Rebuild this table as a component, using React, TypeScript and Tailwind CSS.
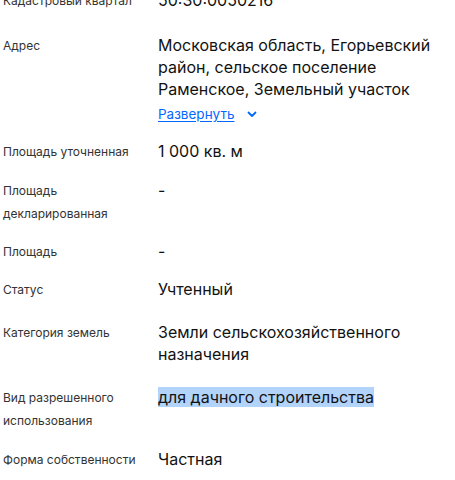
import React from "react";

const font = { fontFamily: "Inter, 'Noto Sans', sans-serif" };

function Row({
  label,
  children,
  mt,
}: {
  label: React.ReactNode;
  children: React.ReactNode;
  mt: string;
}) {
  return (
    <div className={`flex ${mt}`}>
      <div className="w-[158px] shrink-0 pl-[3px] text-[12px] leading-[23px] text-[#333333]">
        {label}
      </div>
      <div className="flex-1 pr-4 text-[16px] leading-[22px] text-[#121212]">{children}</div>
    </div>
  );
}

export default function App() {
  return (
    <div className="w-[455px] h-[480px] overflow-hidden bg-white" style={font}>
      <div className="flex flex-col -mt-[11px]">
        <Row label="Кадастровый квартал" mt="mt-0">
          50:30:0050216
        </Row>
        <Row label="Адрес" mt="mt-[22px]">
          <div>Московская область, Егорьевский район, сельское поселение Раменское, Земельный участок</div>
          <div className="mt-[3px] flex items-center gap-[12px] text-[13.5px] leading-[22px] text-[#0468ff]">
            <span className="underline underline-offset-2">Развернуть</span>
            <svg width="12" height="12" viewBox="0 0 12 12" fill="none">
              <path d="M2.5 4.5L6 8L9.5 4.5" stroke="#0468ff" strokeWidth="1.8" strokeLinecap="round" strokeLinejoin="round" />
            </svg>
          </div>
        </Row>
        <Row label="Площадь уточненная" mt="mt-[15px]">
          1 000 кв. м
        </Row>
        <Row label={<>Площадь<br />декларированная</>} mt="mt-[16px]">
          -
        </Row>
        <Row label="Площадь" mt="mt-[15px]">
          -
        </Row>
        <Row label="Статус" mt="mt-[15px]">
          Учтенный
        </Row>
        <Row label="Категория земель" mt="mt-[20px]">
          Земли сельскохозяйственного назначения
        </Row>
        <Row label={<>Вид разрешенного<br />использования</>} mt="mt-[21px]">
          <span className="bg-[#b2d3fa]">для дачного строительства</span>
        </Row>
        <Row label="Форма собственности" mt="mt-[16px]">
          Частная
        </Row>
      </div>
    </div>
  );
}
